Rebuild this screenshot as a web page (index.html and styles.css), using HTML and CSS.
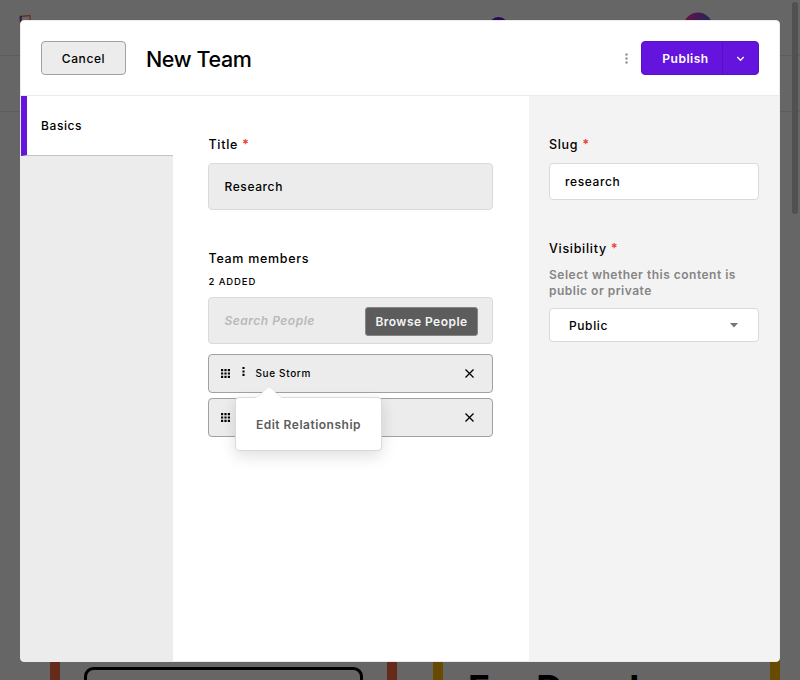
FILE: index.html
```
<!DOCTYPE html>
<html lang="en">
<head>
<meta charset="utf-8">
<title>New Team</title>
<link rel="stylesheet" href="styles.css">
</head>
<body>
<div class="backdrop" aria-hidden="true">
  <div class="topbar"></div>
  <div class="subbar"></div>
  <svg class="art" width="800" height="680">
    <path d="M20.500 24V16.500l9.500-1 .5 8" fill="none" stroke="#6b3020" stroke-width="1.400"/>
    <path d="M20.700 16V22" stroke="#31105c" stroke-width="1.800"/>
    <circle cx="498.500" cy="27" r="10" fill="#270858"/>
    <defs><linearGradient id="avatar"><stop offset="0" stop-color="#651344"/><stop offset="1" stop-color="#21245e"/></linearGradient></defs>
    <circle cx="698" cy="27" r="14.500" fill="url(#avatar)"/>
    <rect x="50" y="640" width="10" height="40" fill="#662a18"/>
    <rect x="387" y="640" width="10" height="40" fill="#662a18"/>
    <rect x="433" y="640" width="10" height="40" fill="#664b00"/>
    <rect x="770" y="640" width="10" height="40" fill="#664b00"/>
    <rect x="85.500" y="668.500" width="276" height="60" rx="8" fill="none" stroke="#000" stroke-width="3"/>
  </svg>
  <div class="headline">For Devel</div>
  <div class="scrollbar"></div>
</div>
<main class="modal">
  <header class="head">
    <button class="cancel">Cancel</button>
    <h1>New Team</h1>
    <svg class="more" width="5" height="11" fill="#999"><circle cx="2.500" cy="1.500" r="1.300"/><circle cx="2.500" cy="5.500" r="1.300"/><circle cx="2.500" cy="9.500" r="1.300"/></svg>
    <div class="publish"><button class="pub">Publish</button><button class="drop" aria-label="More publish options"><svg width="9" height="6"><path d="M1.300 1l3.200 3.300L7.700 1" fill="none" stroke="#fff" stroke-width="1.300"/></svg></button></div>
  </header>
  <div class="body">
    <nav class="tabs"><a class="tab">Basics</a></nav>
    <section class="content">
      <div class="label">Title <b>*</b></div>
      <div class="field tall">Research</div>
      <div class="label members">Team members</div>
      <div class="count">2 ADDED</div>
      <div class="field tall search"><i>Search People</i><button class="browse">Browse People</button></div>
      <div class="person">
        <svg class="grip" width="9" height="9"><path d="M0 1.100h9M0 4.500h9M0 7.900h9" stroke="#000" stroke-width="2.200" stroke-dasharray="2.200 1.200"/></svg>
        <svg class="dots" width="3" height="9"><path d="M1.500 0v9" stroke="#000" stroke-width="2.100" stroke-dasharray="2.100 1.300"/></svg>
        <span class="name">Sue Storm</span>
        <svg class="close" width="9" height="9"><path d="M.5.5l8 8m0-8l-8 8" stroke="#000" stroke-width="1.300"/></svg>
        <div class="menu"><svg class="arrow" width="26" height="12"><path d="M0 12V11C2 11 3 10 4 9L10.500 2.500Q13-.5 15.500 2.500L22 9C23 10 24 11 26 11V12Z" fill="#fff"/><path d="M0 11C2 11 3 10 4 9L10.500 2.500Q13-.5 15.500 2.500L22 9C23 10 24 11 26 11" fill="none" stroke="#e2e2e2" stroke-width=".7"/></svg>Edit Relationship</div>
      </div>
      <div class="person">
        <svg class="grip" width="9" height="9"><path d="M0 1.100h9M0 4.500h9M0 7.900h9" stroke="#000" stroke-width="2.200" stroke-dasharray="2.200 1.200"/></svg>
        <svg class="close" width="9" height="9"><path d="M.5.5l8 8m0-8l-8 8" stroke="#000" stroke-width="1.300"/></svg>
      </div>
    </section>
    <aside class="side">
      <div class="label">Slug <b>*</b></div>
      <div class="field slug">research</div>
      <div class="label visibility">Visibility <b>*</b></div>
      <p class="help">Select whether this content is public or private</p>
      <div class="field select">Public<svg width="8" height="5"><path d="M0 0h8L4 4.500z" fill="#757575"/></svg></div>
    </aside>
  </div>
</main>
</body>
</html>
```
FILE: styles.css
```
* { box-sizing: border-box; }
body { margin: 0; height: 680px; overflow: hidden; background: #666; font: 500 12px/16px Inter, sans-serif; letter-spacing: .6px; color: #000; padding: 20px; }
button { font: inherit; letter-spacing: inherit; padding: 0; margin: 0; }
svg { display: block; flex: none; }
.backdrop { position: absolute; inset: 0; overflow: hidden; }
.topbar { height: 56px; border-bottom: 1px solid #5d5d5d; }
.subbar { height: 56px; border-bottom: 1px solid #5d5d5d; }
.art { position: absolute; left: 0; top: 0; }
.headline { position: absolute; left: 468px; top: 667px; font-size: 37px; line-height: 44px; font-weight: 700; letter-spacing: .3px; white-space: nowrap; }
.scrollbar { position: absolute; right: 2px; top: 2px; width: 6px; height: 212px; border-radius: 3px; background: #515151; }
.modal { position: relative; width: 760px; height: 642px; background: #fff; border: 1px solid #ebebeb; border-radius: 4px; overflow: hidden; display: flex; flex-direction: column; }
.head { height: 75px; flex: none; border-bottom: 1px solid #ebebeb; display: flex; align-items: center; padding: 0 20px; }
.cancel { width: 85px; height: 34px; border: 1px solid #a1a1a1; border-radius: 4px; background: #ececec; color: #000; padding-top: 1px; }
h1 { margin: 2px auto 0 20px; font-size: 21.5px; line-height: 30px; font-weight: 500; letter-spacing: -.4px; }
.more { margin-right: 12px; }
.publish { display: flex; width: 118px; height: 34px; border-radius: 4px; background: #6514dd; border: 1px solid #5b12c7; overflow: hidden; }
.publish button { border: 0; background: none; color: #fff; }
.publish .pub { width: 80px; padding: 2px 0 0 7px; font-weight: 600; letter-spacing: .5px; }
.publish .drop { flex: 1; border-left: 1px solid #5510bb; display: flex; align-items: center; justify-content: center; padding: 2px 1px 0 0; }
.body { flex: 1; display: flex; }
.tabs { width: 152px; background: #ececec; }
.tab { display: flex; align-items: center; height: 60px; border-left: 6px solid #6514dd; border-bottom: 1px solid #c2c2c2; background: #fff; padding-left: 14px; }
.content { width: 356px; padding: 41px 36px 0 35px; }
.side { flex: 1; background: #f3f3f3; padding: 41px 20px 0; }
.label { height: 16px; font-size: 12.5px; letter-spacing: .7px; }
.content .label { padding-left: .5px; }
.label b { color: #ee4236; font-weight: 700; }
.field { border: 1px solid #dadada; border-radius: 4px; background: #fff; display: flex; align-items: center; padding: 0 15px; }
.label + .field { margin-top: 10px; }
.tall { height: 47px; background: #ececec; padding-left: 15.5px; }
.members { margin-top: 41px; }
.count { font-size: 9.5px; line-height: 14px; margin: 8px 0 8px .5px; letter-spacing: .9px; }
.search { justify-content: space-between; padding-right: 14px; }
.search i { color: #b9b9b9; font-weight: 600; letter-spacing: .5px; }
.browse { position: relative; top: 1px; width: 113px; height: 29px; background: #5c5c5c; color: #f4f4f4; border: 1px solid #858585; border-radius: 3px; font-weight: 600; letter-spacing: .47px; }
.person { position: relative; height: 39px; border: 1px solid #a1a1a1; border-radius: 4px; background: #ececec; display: flex; align-items: center; padding: 0 18px 0 12px; margin-top: 10px; font-size: 10px; letter-spacing: .65px; }
.person + .person { margin-top: 5px; }
.name { margin-top: -2px; }
.dots { margin: -5px 10.5px 0 12px; }
.close { margin-left: auto; }
.menu { position: absolute; z-index: 2; left: 26px; top: 42px; width: 147px; height: 54px; display: flex; align-items: center; justify-content: center; border: 1px solid #dadada; border-radius: 4px; background: #fff; color: #5c5c5c; font-size: 12px; letter-spacing: .5px; font-weight: 600; padding-top: 1px; box-shadow: 0 5px 15px rgba(0,0,0,.13); }
.arrow { position: absolute; left: 20px; top: -12px; }
.slug { height: 37px; }
.visibility { margin-top: 41px; }
.help { margin: 10px 0 9px; color: #858585; font-weight: 600; letter-spacing: .5px; }
.select { height: 34px; padding: 1px 20px 0 19px; justify-content: space-between; }
```
